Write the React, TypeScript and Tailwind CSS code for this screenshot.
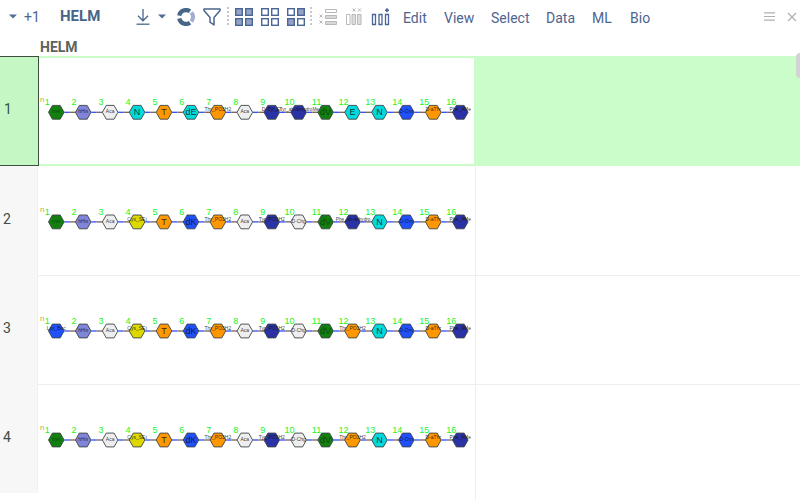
import React from 'react';

type Monomer = [label: string, fill: string];

const GREEN = '#12800f';
const LILAC = '#8085da';
const WHITE = '#eeeeee';
const CYAN = '#00dadd';
const ORANGE = '#ff9800';
const BLUE = '#2050fa';
const NAVY = '#2b32a5';
const YELLOW = '#ddd800';

const tail: Monomer[] = [['D-Orn', BLUE], ['D-aThr', ORANGE], ['Phe_4Me', NAVY]];
const middle: Monomer[] = [['Cys_SEt', YELLOW], ['T', ORANGE], ['dK', BLUE], ['Thr_PO3H2', ORANGE], ['Aca', WHITE], ['Tyr_PO3H2', NAVY], ['D-Chg', WHITE], ['dV', GREEN]];

const rows: Monomer[][] = [
  [['meI', GREEN], ['hHis', LILAC], ['Aca', WHITE], ['N', CYAN], ['T', ORANGE], ['dE', CYAN], ['Thr_PO3H2', ORANGE], ['Aca', WHITE], ['D-Tyr_Et', NAVY], ['Tyr_ab-dehydroMe', NAVY], ['dV', GREEN], ['E', CYAN], ['N', CYAN], ...tail],
  [['meI', GREEN], ['hHis', LILAC], ['Aca', WHITE], ...middle, ['Phe_ab-dehydro', NAVY], ['N', CYAN], ...tail],
  [['Lys_Boc', BLUE], ['hHis', LILAC], ['Aca', WHITE], ...middle, ['Thr_PO3H2', ORANGE], ['N', CYAN], ...tail],
  [['meI', GREEN], ['hHis', LILAC], ['Aca', WHITE], ...middle, ['Thr_PO3H2', ORANGE], ['N', CYAN], ...tail],
];

const centerX = (i: number) => 18.3 + i * 26.93;

function Sequence({ items, cy }: { items: Monomer[]; cy: number }) {
  return (
    <svg width="435" height="104" viewBox="0 0 435 104" className="block font-['Liberation_Sans',sans-serif]">
      <text x="2" y={cy - 10} fontSize="8" fill="#b9b04a">n</text>
      {items.slice(1).map((_, i) => (
        <g key={i} strokeWidth="1.3">
          <path d={`M${centerX(i) + 8} ${cy}h5.5`} stroke="#2c4dfa" />
          <path d={`M${centerX(i) + 13.5} ${cy}h6`} stroke="#795f58" />
        </g>
      ))}
      {items.map(([label, fill], i) => {
        const x = centerX(i);
        const big = label.length < 3;
        return (
          <g key={i}>
            <path d={`M${x - 7.8} ${cy}l3.9 -6.9h7.8l3.9 6.9l-3.9 6.900h-7.8z`} fill={fill} stroke="#3c4444" strokeWidth="0.9" />
            <text x={x - 9.1} y={cy - 7.4} fontSize="9" textAnchor="middle" fill="#20f520">{i + 1}</text>
            <text x={label.length > 13 ? x + 0.6 : x} y={big ? cy + 3 : label.length > 5 ? cy - 1.2 : cy + 0.7} fontSize={big ? 9 : label.length > 9 ? 4.7 : 5} textAnchor="middle" fill="#111" fillOpacity={fill === GREEN ? 0.55 : 0.85}>{label}</text>
          </g>
        );
      })}
    </svg>
  );
}

function Caret() {
  return <svg width="8" height="5" viewBox="0 0 8 5"><path d="M0 .4h8L4 4.6z" fill="#4f6d99" /></svg>;
}

function Grid({ filled }: { filled: boolean[] }) {
  return (
    <svg width="18" height="18" viewBox="0 0 18 18">
      {filled.map((on, i) => (
        <rect key={i} x={i % 2 ? 10.7 : 0.7} y={i > 1 ? 10.7 : 0.7} width="6.6" height="6.6" fill={on ? '#96a3c4' : '#fff'} stroke="#4a6598" strokeWidth="1.4" />
      ))}
    </svg>
  );
}

function Dots() {
  return <div className="h-5 w-0.5 bg-[repeating-linear-gradient(to_bottom,#c9c9c9_0px,#c9c9c9_2px,transparent_2px,transparent_4px)]" />;
}

function Toolbar() {
  return (
    <header className="flex h-[33px] shrink-0 items-center text-[#4d6490]">
      <div className="ml-[9px]"><Caret /></div>
      <span className="ml-[7px] w-9 text-sm">+1</span>
      <span className="w-[76px] text-[15px] font-bold text-[#486587]">HELM</span>
      <svg width="14" height="16" viewBox="0 0 14 16" fill="none" stroke="#49678f" strokeWidth="1.3"><path d="M7 0v11.5M2 6.8l5 5 5-5" /><path d="M.5 15.200h13" strokeWidth="1.3" /></svg>
      <div className="ml-2"><Caret /></div>
      <svg className="ml-[11px]" width="18" height="18" viewBox="0 0 18 18" fill="none" strokeWidth="4.2">
        <path d="M2.2 7.6A7 7 0 0 1 13 3.3" stroke="#476489" />
        <path d="M2.2 10.5A7 7 0 0 0 13 14.7" stroke="#476489" />
        <path d="M14.3 4.5A7 7 0 0 1 14.3 13.5" stroke="#a4acd0" />
      </svg>
      <svg className="ml-[8px]" width="18" height="18" viewBox="0 0 18 18" fill="none" stroke="#49658f" strokeWidth="1.5" strokeLinejoin="round"><path d="M1 1h16v1.500L11 9.500V17l-4-2.800V9.500L1 2.500z" /></svg>
      <div className="ml-[6px]"><Dots /></div>
      <div className="ml-[6px] flex gap-2">
        <Grid filled={[true, true, true, true]} />
        <Grid filled={[false, false, false, false]} />
        <Grid filled={[false, true, true, false]} />
      </div>
      <div className="ml-[5px]"><Dots /></div>
      <svg className="ml-[7px]" width="18" height="18" viewBox="0 0 18 18" fill="none" stroke="#b8b8b8">
        <path d="M.5 6.500l3 3m0-3l-3 3M.5 12.500l3 3m0-3l-3 3" />
        <path d="M6.500 1.500h11v3h-11z" /><path d="M6.500 7.500h11v3h-11zM6.500 13.500h11v3h-11z" fill="#d8d8d8" />
      </svg>
      <svg className="ml-2" width="18" height="18" viewBox="0 0 18 18" fill="none" stroke="#b8b8b8">
        <path d="M7.500.5l3 3m0-3l-3 3M13 .5l3 3m0-3l-3 3" />
        <path d="M1.500 6.500h3.500v10H1.500z" /><path d="M7 6.500h3.500v10H7zM12.500 6.500h3.500v10h-3.500z" fill="#ddd" />
      </svg>
      <svg className="ml-2" width="19" height="18" viewBox="0 0 19 18" fill="none" stroke="#4a6598" strokeWidth="1.3">
        <path d="M1.500 6.500h3v10h-3zM8 6.500h3v10H8zM14.500 6.500h3v10h-3z" /><path d="M16 .2v4M14 2.200h4" strokeWidth="1.6" />
      </svg>
      <nav className="ml-[13px] flex pt-[3px] text-sm">
        <span className="w-[41px]">Edit</span>
        <span className="w-[47px]">View</span>
        <span className="w-[55px]">Select</span>
        <span className="w-[46px]">Data</span>
        <span className="w-[38px]">ML</span>
        <span>Bio</span>
      </nav>
      <svg className="mr-[12px] ml-auto" width="11" height="9" viewBox="0 0 11 9" stroke="#aeb0b6" strokeWidth="1.2"><path d="M0 .9h11M0 4.500h11M0 8.100h11" /></svg>
      <svg className="mr-[3px]" width="10" height="10" viewBox="0 0 10 10" stroke="#aeb0b6" strokeWidth="1.2"><path d="M1 1l8 8M9 1L1 9" /></svg>
    </header>
  );
}

export default function App() {
  return (
    <div className="relative flex h-[500px] w-[800px] flex-col overflow-hidden bg-white font-['Roboto',sans-serif]">
      <Toolbar />
      <div className="h-[23px] shrink-0 pl-10 text-[14px] leading-[29px] font-bold text-[#5c635c]">HELM</div>
      <main className="flex flex-col">
        {rows.map((items, i) => {
          const current = i === 0;
          return (
            <div key={i} className={current ? 'flex h-[110px]' : 'flex h-[109px]'}>
              <div className={current
                ? 'flex w-[39px] items-center border border-r-[1.5px] border-l-0 border-[#3f4f3f] bg-[#c5f7c5] pb-1 pl-1 text-sm text-[#31543a]'
                : 'flex w-[38px] items-center border-r border-[#f0f0f0] bg-[#f7f7f7] pb-[3px] pl-[3px] text-sm text-[#3f4b45]'}>
                {i + 1}
              </div>
              <div className={current
                ? 'w-[435px] border-y-2 border-[#cbfdcb] [&>svg]:-ml-px'
                : i === 1 ? 'w-[438px] border-r border-[#eeeeee]' : 'w-[438px] border-t border-r border-[#eeeeee]'}>
                <Sequence items={items} cy={current ? 54.3 : i === 1 ? 55.9 : 55} />
              </div>
              <div className={current ? 'flex-1 bg-[#cbfdcb]' : i === 1 ? 'flex-1' : 'flex-1 border-t border-[#eeeeee]'} />
            </div>
          );
        })}
      </main>
      <div className="ml-[38px] w-[438px] flex-1 border-r border-[#eeeeee]" />
      <div className="absolute top-[53px] right-0 h-[25px] w-[4px] rounded-l-sm bg-[#d3d3d3]" />
    </div>
  );
}
